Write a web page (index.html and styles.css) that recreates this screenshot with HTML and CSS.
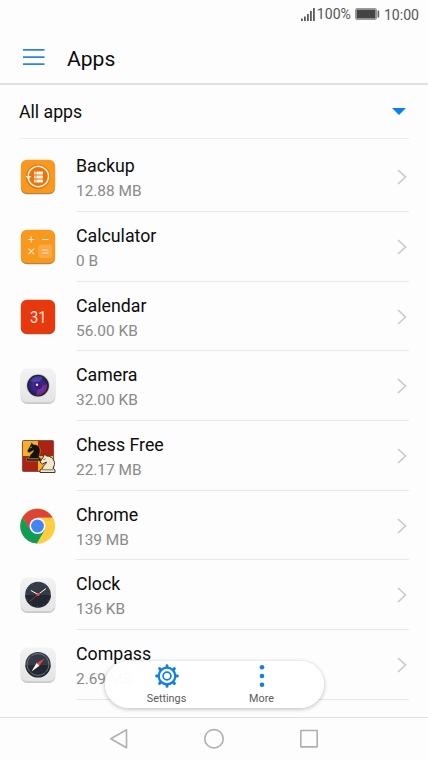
FILE: index.html
```html
<!DOCTYPE html>
<html lang="en">
<head>
  <meta charset="UTF-8" />
  <meta name="viewport" content="width=device-width, initial-scale=1.0">
  <title>Apps</title>
  <link rel="stylesheet" href="styles.css">
</head>
<body>
  <div class="screen">
    <div class="status-bar">
      <svg class="signal" width="14" height="13" viewBox="0 0 14 13" fill="#5a5a5a">
        <rect x="0" y="10.5" width="1.8" height="2.5"/><rect x="3" y="8.5" width="1.8" height="4.5"/>
        <rect x="6" y="6" width="1.8" height="7"/><rect x="9" y="3" width="1.8" height="10"/>
        <rect x="12" y="0" width="1.8" height="13"/>
      </svg>
      <span class="percent">100%</span>
      <svg class="battery" width="25" height="12" viewBox="0 0 25 12">
        <rect x=".5" y=".5" width="21" height="11" rx="1.5" fill="#ddd" stroke="#999"/>
        <rect x="1.5" y="1.5" width="19" height="9" fill="#444"/>
        <rect x="22.5" y="2.5" width="1.7" height="7" rx=".5" fill="#666"/>
      </svg>
      <span class="time">10:00</span>
    </div>

    <header class="app-bar">
      <svg width="22" height="18" viewBox="0 0 22 18" stroke="#2a86e2" stroke-width="1.8">
        <path d="M0 1.9h21.500M0 9.100h21.500M0 16.200h21.500"/>
      </svg>
      <h1>Apps</h1>
    </header>

    <main class="content">
      <div class="filter">
        <span>All apps</span>
        <svg width="14" height="7" viewBox="0 0 14 7" fill="#0a80f5"><path d="M0 0h14L7 7z"/></svg>
      </div>

      <ul class="app-list">
        <li class="app">
          <svg class="icon" viewBox="0 0 36 37">
            <rect x=".9" y="1.700" width="34.200" height="33.500" rx="6" fill="#b98245"/>
            <rect x=".9" y=".8" width="34.200" height="33.300" rx="6" fill="#f8981f"/>
            <circle cx="18" cy="17.800" r="12.200" fill="#e8760f"/>
            <path d="M8.300 19.500A10.200 10.200 0 1 0 11.500 9.900Q8 13 8.200 18" fill="none" stroke="#fff3e2" stroke-width="1.500"/>
            <path d="M5.800 17h5.400l-2.800 4z" fill="#fff3e2"/>
            <g fill="#fff3e2"><rect x="14" y="12.500" width="9" height="3" rx=".7"/><rect x="14" y="16.500" width="9" height="3" rx=".7"/><rect x="14" y="20.500" width="9" height="3" rx=".7"/></g>
            <path d="M16 12v12" stroke="#ee7812" stroke-width=".7"/>
          </svg>
          <div class="details">
            <div class="text"><div class="name">Backup</div><div class="size">12.88 MB</div></div>
            <svg class="chevron" viewBox="0 0 10 16"><path d="M1 1l7.500 7L1 15"/></svg>
          </div>
        </li>
        <li class="app">
          <svg class="icon" viewBox="0 0 36 37">
            <rect x=".9" y="1.700" width="34.200" height="33.500" rx="6" fill="#b98245"/>
            <rect x=".9" y=".8" width="34.200" height="33.300" rx="6" fill="#f8991f"/>
            <rect x="18.300" y="15.500" width="13.800" height="13.500" rx="2.500" fill="#fba845"/>
            <path d="M8.200 10.500h6M11.200 7.500v6M22 10.500h6.500M8.500 19.700l5.500 5.500M14 19.700l-5.500 5.500M22 21h6.500M22 24h6.500" stroke="#ffe5bd" stroke-width="1.100"/>
          </svg>
          <div class="details">
            <div class="text"><div class="name">Calculator</div><div class="size">0 B</div></div>
            <svg class="chevron" viewBox="0 0 10 16"><path d="M1 1l7.500 7L1 15"/></svg>
          </div>
        </li>
        <li class="app">
          <svg class="icon" viewBox="0 0 36 37">
            <rect x=".9" y="1.700" width="34.200" height="33.500" rx="6" fill="#bd4a30"/>
            <rect x=".9" y=".8" width="34.200" height="33.500" rx="6" fill="#e8380d"/>
            <text x="18.200" y="23.700" class="date" textLength="16.500" lengthAdjust="spacingAndGlyphs">31</text>
          </svg>
          <div class="details">
            <div class="text"><div class="name">Calendar</div><div class="size">56.00 KB</div></div>
            <svg class="chevron" viewBox="0 0 10 16"><path d="M1 1l7.500 7L1 15"/></svg>
          </div>
        </li>
        <li class="app">
          <svg class="icon" viewBox="0 0 36 37">
            <defs>
              <radialGradient id="lens" cx=".48" cy=".48" r=".55">
                <stop offset="0" stop-color="#7042c4"/><stop offset=".45" stop-color="#43279a"/><stop offset="1" stop-color="#241650"/>
              </radialGradient>
              <linearGradient id="plate" x1="0" y1="0" x2="0" y2="1">
                <stop offset="0" stop-color="#f3f3f3"/><stop offset="1" stop-color="#e4e4e4"/>
              </linearGradient>
            </defs>
            <rect x=".7" y="1.500" width="34.600" height="34.400" rx="6.500" fill="#c9c9c9"/>
            <rect x=".7" y=".5" width="34.600" height="33.800" rx="6.500" fill="url(#plate)"/>
            <circle cx="18" cy="17.600" r="11.600" fill="#c8c8cc"/>
            <circle cx="18" cy="17.600" r="10.900" fill="#262333"/>
            <circle cx="18" cy="17.600" r="9.500" fill="url(#lens)"/>
            <path d="M19 19l8-3a9.500 9.500 0 0 1-11 11z" fill="#a43ba5" opacity=".55"/>
            <path d="M10 13a9.500 9.500 0 0 1 13-3.500l-5 5.500z" fill="#5264cf" opacity=".5"/>
            <circle cx="18" cy="17.600" r="4" fill="#3c1c75"/>
            <circle cx="17" cy="16.800" r="1.200" fill="#f0e8ff"/>
          </svg>
          <div class="details">
            <div class="text"><div class="name">Camera</div><div class="size">32.00 KB</div></div>
            <svg class="chevron" viewBox="0 0 10 16"><path d="M1 1l7.500 7L1 15"/></svg>
          </div>
        </li>
        <li class="app">
          <svg class="icon" viewBox="0 0 36 37">
            <rect x="2.500" y="2.500" width="31" height="31" rx="1.500" fill="#a32416" stroke="#7d5750" stroke-width="1.200"/>
            <path d="M3 3h15v15H3zM18 18h15v15H18z" fill="#f7ae22"/>
            <path d="M18 3h15v15H18zM3 18h15v15H3z" fill="#ad2111"/>
            <path d="M6.500 23v-2.500l3-1.500c0-3 4-4.500 4-6.500l-4.500 2.500-2-2 3-5 1.500-3.500 2 2c5-.5 7.500 3.500 6.500 8.500l-1 4 2 1.500V23z" fill="#17110e" stroke="#d9a75c" stroke-width=".5"/>
            <path d="M10 10l2-1M8 20.800h11" stroke="#e6d7bd" stroke-width=".6"/>
            <path d="M20 34.500V32l2.500-1.500c0-3 4-4.500 4-6.500l-4 2-2.500-2 3-4.500 1.500-3.500 2 2c5 0 8.500 4 8 8.500l-1.500 4 2 1.500v2.500z" fill="#f3e7ce" stroke="#2a211a" stroke-width=".9"/>
            <path d="M22 31.800h11M23.500 21.500l2-.7" stroke="#503f31" stroke-width=".7"/>
          </svg>
          <div class="details">
            <div class="text"><div class="name">Chess Free</div><div class="size">22.17 MB</div></div>
            <svg class="chevron" viewBox="0 0 10 16"><path d="M1 1l7.500 7L1 15"/></svg>
          </div>
        </li>
        <li class="app">
          <svg class="icon" viewBox="0 0 36 37">
            <circle cx="17.500" cy="18" r="17.500" fill="#ffcd40"/>
            <path d="M17.500 18L10 22.500 2.500 9.300A17.500 17.500 0 0 1 32.700 9.700H17.500z" fill="#db4437"/>
            <path d="M2.500 9.300A17.500 17.500 0 0 0 17 35.500l8-13.300-7.500-4.200-7.200 4.200z" fill="#0f9d58"/>
            <path d="M17.500 18v-8.300h15.200A17.500 17.500 0 0 1 17 35.500L24.800 22z" fill="#ffcd40"/>
            <circle cx="17.500" cy="18" r="8" fill="#f5f5f5"/>
            <circle cx="17.500" cy="18" r="6.400" fill="#4285f4"/>
          </svg>
          <div class="details">
            <div class="text"><div class="name">Chrome</div><div class="size">139 MB</div></div>
            <svg class="chevron" viewBox="0 0 10 16"><path d="M1 1l7.500 7L1 15"/></svg>
          </div>
        </li>
        <li class="app">
          <svg class="icon" viewBox="0 0 36 37">
            <rect x=".7" y="1.500" width="34.600" height="34.400" rx="6.500" fill="#c9c9c9"/>
            <rect x=".7" y=".5" width="34.600" height="33.800" rx="6.500" fill="url(#plate)"/>
            <circle cx="18" cy="17.500" r="12.800" fill="#343b47"/>
            <path d="M5.200 18a12.800 12.800 0 0 0 25.600 0z" fill="#222832"/>
            <circle cx="18" cy="17.500" r="11.800" fill="none" stroke="#8d929a" stroke-width=".7" stroke-dasharray=".6 5.580"/>
            <path d="M18 17.500l8-6M18 17.500l-7-4" stroke="#fff" stroke-width="1"/>
            <path d="M20 16l-10.500 8.500" stroke="#c9332f" stroke-width=".8"/>
            <circle cx="18" cy="17.500" r="1.600" fill="#e74a43"/>
          </svg>
          <div class="details">
            <div class="text"><div class="name">Clock</div><div class="size">136 KB</div></div>
            <svg class="chevron" viewBox="0 0 10 16"><path d="M1 1l7.500 7L1 15"/></svg>
          </div>
        </li>
        <li class="app">
          <svg class="icon" viewBox="0 0 36 37">
            <rect x=".7" y="1.500" width="34.600" height="34.400" rx="6.500" fill="#c9c9c9"/>
            <rect x=".7" y=".5" width="34.600" height="33.800" rx="6.500" fill="url(#plate)"/>
            <circle cx="18" cy="17.500" r="12.600" fill="#343b47"/>
            <path d="M5.400 18a12.600 12.600 0 0 0 25.200 0z" fill="#222832"/>
            <circle cx="18" cy="17.500" r="10.900" fill="none" stroke="#7d838c" stroke-width=".8" stroke-dasharray="16.120 1" stroke-dashoffset="8"/>
            <path d="M24.500 11.500L16.600 16l2.800 2.800z" fill="#e0423d"/>
            <path d="M11.500 24.500l5.100-8.500 2.800 2.800z" fill="#fff"/>
          </svg>
          <div class="details">
            <div class="text"><div class="name">Compass</div><div class="size">2.69 MB</div></div>
            <svg class="chevron" viewBox="0 0 10 16"><path d="M1 1l7.500 7L1 15"/></svg>
          </div>
        </li>
        <li class="app">
          <div class="icon"></div>
          <div class="details">
            <div class="text"><div class="name">C</div></div>
          </div>
        </li>
      </ul>
    </main>

    <div class="toolbar">
      <div class="action">
        <svg width="26" height="26" viewBox="-13 -13 26 26" fill="none" stroke="#0f7fe8">
          <circle r="8.300" stroke-width="2.200"/>
          <circle r="3.900" stroke-width="1.700"/>
          <path d="M0-9v-1.400M0 9v1.400M-9 0h-1.400M9 0h1.400M6.500-6.500l.9-.9M-6.500 6.500l-.9.9M6.500 6.500l.9.9M-6.500-6.500l-.9-.9" stroke-width="2.900" stroke-linecap="round"/>
        </svg>
        <span>Settings</span>
      </div>
      <div class="action">
        <svg width="26" height="26" viewBox="-13 -13 26 26" fill="#0f7fe8">
          <circle cy="-8.700" r="2.300"/><circle r="2.300"/><circle cy="8.700" r="2.300"/>
        </svg>
        <span>More</span>
      </div>
    </div>

    <nav class="nav-bar">
      <svg width="20" height="22" viewBox="0 0 20 22"><path d="M17.500 1.800v18L1.800 10.800z"/></svg>
      <svg width="20" height="22" viewBox="0 0 20 22"><circle cx="10" cy="10.800" r="9.200"/></svg>
      <svg width="20" height="22" viewBox="0 0 20 22"><rect x="1.800" y="2.500" width="16.400" height="16.400" rx=".5"/></svg>
    </nav>
  </div>
</body>
</html>
```
FILE: styles.css
```css
* {
  margin: 0;
  padding: 0;
  box-sizing: border-box;
}

body {
  font-family: Roboto, sans-serif;
  background-color: #fdfdfd;
  color: #0c0c0c;
}

svg {
  display: block;
  flex-shrink: 0;
}

.screen {
  position: relative;
  display: flex;
  flex-direction: column;
  width: 428px;
  height: 760px;
  overflow: hidden;
}

.status-bar {
  display: flex;
  align-items: center;
  justify-content: flex-end;
  height: 28px;
  padding-right: 9px;
  font-size: 14.1px;
  color: #555;
}

.percent {
  margin: 0 4px 0 2px;
}

.time {
  margin: 2px 0 0 4px;
}

.app-bar {
  display: flex;
  align-items: center;
  gap: 22px;
  height: 57px;
  padding: 2px 0 0 23px;
  border-bottom: 2px solid #e0e0e0;
}

.app-bar h1 {
  padding-top: 3px;
  font-size: 21.1px;
  font-weight: 400;
}

.content {
  flex: 1;
  min-height: 0;
  overflow: hidden;
}

.filter {
  display: flex;
  align-items: center;
  justify-content: space-between;
  height: 54px;
  margin: 0 19px;
  padding-right: 3px;
  font-size: 17.7px;
  border-bottom: 1px solid #ececec;
}

.app-list {
  list-style: none;
  padding-top: 3.2px;
}

.app {
  display: flex;
  gap: 20px;
  height: 69.7px;
  padding: 0 19px 0 20px;
}

.icon {
  width: 36px;
  height: 37px;
  margin-top: 17px;
}

.date {
  fill: #ffe9df;
  font-size: 17px;
  text-anchor: middle;
}

.details {
  display: flex;
  flex: 1;
  justify-content: space-between;
  border-bottom: 1px solid #e8e8e8;
}

.name {
  padding-top: 14px;
  font-size: 17.75px;
  line-height: 21px;
}

.size {
  padding-top: 4px;
  font-size: 15.4px;
  line-height: 20px;
  color: #8a8a8a;
}

.chevron {
  width: 10px;
  height: 16px;
  margin: 27px 2px 0 0;
  fill: none;
  stroke: #cacaca;
  stroke-width: 1.7;
}

.toolbar {
  position: absolute;
  left: 104.5px;
  top: 660.5px;
  display: flex;
  justify-content: center;
  width: 219px;
  height: 47px;
  border-radius: 24px;
  background-color: rgba(255, 255, 255, 0.96);
  box-shadow: 0 1px 4px rgba(0, 0, 0, 0.28);
}

.action {
  display: flex;
  flex-direction: column;
  align-items: center;
  width: 95px;
  padding-top: 2px;
  font-size: 10.8px;
  line-height: 13px;
  color: #5c5c5c;
}

.action span {
  padding-top: 3px;
}

.nav-bar {
  display: flex;
  justify-content: center;
  gap: 75px;
  height: 43px;
  padding-top: 10px;
  border-top: 1px solid #e0e0e0;
  background-color: #fdfdfd;
}

.nav-bar svg {
  fill: none;
  stroke: #b0b0b0;
  stroke-width: 1.6;
  stroke-linejoin: round;
}
```
